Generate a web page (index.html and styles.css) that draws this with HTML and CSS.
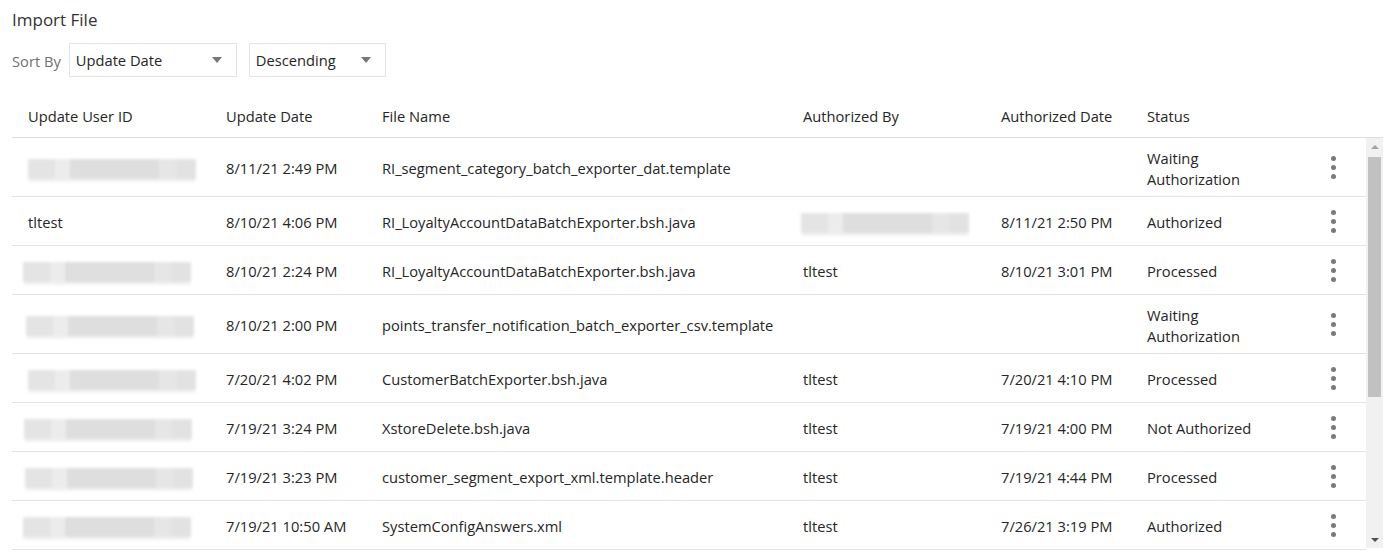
FILE: index.html
```html
<!DOCTYPE html>
<html>
<head>
<meta charset="utf-8">
<link rel="stylesheet" href="styles.css">
</head>
<body>
<div class="page">
  <h1 class="title">Import File</h1>
  <div class="toolbar">
    <span class="sort-label">Sort By</span>
    <div class="select sel-field"><span>Update Date</span><span class="caret"></span></div>
    <div class="select sel-order"><span>Descending</span><span class="caret"></span></div>
  </div>
  <div class="table">
    <div class="row head">
      <div class="cell">Update User ID</div>
      <div class="cell">Update Date</div>
      <div class="cell">File Name</div>
      <div class="cell">Authorized By</div>
      <div class="cell">Authorized Date</div>
      <div class="cell">Status</div>
      <div class="cell"></div>
    </div>
    <div class="body">
      <div class="rows">
        <div class="row tall">
          <div class="cell"><span class="blur"></span></div>
          <div class="cell">8/11/21 2:49 PM</div>
          <div class="cell">RI_segment_category_batch_exporter_dat.template</div>
          <div class="cell"></div>
          <div class="cell"></div>
          <div class="cell">Waiting<br>Authorization</div>
          <div class="cell kebab"><span></span><span></span><span></span></div>
        </div>
        <div class="row">
          <div class="cell">tltest</div>
          <div class="cell">8/10/21 4:06 PM</div>
          <div class="cell">RI_LoyaltyAccountDataBatchExporter.bsh.java</div>
          <div class="cell"><span class="blur shift-l2"></span></div>
          <div class="cell">8/11/21 2:50 PM</div>
          <div class="cell">Authorized</div>
          <div class="cell kebab"><span></span><span></span><span></span></div>
        </div>
        <div class="row">
          <div class="cell"><span class="blur shift-l5"></span></div>
          <div class="cell">8/10/21 2:24 PM</div>
          <div class="cell">RI_LoyaltyAccountDataBatchExporter.bsh.java</div>
          <div class="cell">tltest</div>
          <div class="cell">8/10/21 3:01 PM</div>
          <div class="cell">Processed</div>
          <div class="cell kebab"><span></span><span></span><span></span></div>
        </div>
        <div class="row tall">
          <div class="cell"><span class="blur shift-l2"></span></div>
          <div class="cell">8/10/21 2:00 PM</div>
          <div class="cell">points_transfer_notification_batch_exporter_csv.template</div>
          <div class="cell"></div>
          <div class="cell"></div>
          <div class="cell">Waiting<br>Authorization</div>
          <div class="cell kebab"><span></span><span></span><span></span></div>
        </div>
        <div class="row">
          <div class="cell"><span class="blur"></span></div>
          <div class="cell">7/20/21 4:02 PM</div>
          <div class="cell">CustomerBatchExporter.bsh.java</div>
          <div class="cell">tltest</div>
          <div class="cell">7/20/21 4:10 PM</div>
          <div class="cell">Processed</div>
          <div class="cell kebab"><span></span><span></span><span></span></div>
        </div>
        <div class="row">
          <div class="cell"><span class="blur shift-l4"></span></div>
          <div class="cell">7/19/21 3:24 PM</div>
          <div class="cell">XstoreDelete.bsh.java</div>
          <div class="cell">tltest</div>
          <div class="cell">7/19/21 4:00 PM</div>
          <div class="cell">Not Authorized</div>
          <div class="cell kebab"><span></span><span></span><span></span></div>
        </div>
        <div class="row">
          <div class="cell"><span class="blur shift-l3"></span></div>
          <div class="cell">7/19/21 3:23 PM</div>
          <div class="cell">customer_segment_export_xml.template.header</div>
          <div class="cell">tltest</div>
          <div class="cell">7/19/21 4:44 PM</div>
          <div class="cell">Processed</div>
          <div class="cell kebab"><span></span><span></span><span></span></div>
        </div>
        <div class="row">
          <div class="cell"><span class="blur shift-l5"></span></div>
          <div class="cell">7/19/21 10:50 AM</div>
          <div class="cell">SystemConfigAnswers.xml</div>
          <div class="cell">tltest</div>
          <div class="cell">7/26/21 3:19 PM</div>
          <div class="cell">Authorized</div>
          <div class="cell kebab"><span></span><span></span><span></span></div>
        </div>
      </div>
      <div class="scrollbar">
        <div class="sb-btn"><span class="sb-up"></span></div>
        <div class="sb-track">
          <div class="sb-thumb"></div>
        </div>
        <div class="sb-btn"><span class="sb-down"></span></div>
      </div>
    </div>
  </div>
</div>
</body>
</html>
```
FILE: styles.css
```css
html, body {
  margin: 0;
  padding: 0;
  background: #fff;
}
body {
  font-family: "Open Sans", "Noto Sans", sans-serif;
  font-size: 14.7px;
  color: #262626;
  overflow: hidden;
}
.page {
  padding: 8px 14px 0 12px;
}
.title {
  margin: 0;
  font-size: 17px;
  font-weight: 400;
  line-height: 24px;
  color: #333;
}
.toolbar {
  display: flex;
  align-items: center;
  margin-top: 11px;
  height: 34px;
}
.sort-label {
  color: #707070;
  margin-right: 8px;
  margin-top: 2px;
}
.select {
  height: 34px;
  box-sizing: border-box;
  border: 1px solid #e3e3e3;
  display: flex;
  align-items: center;
  justify-content: space-between;
  padding: 0 14px 0 6px;
  color: #262626;
}
.sel-field { width: 168px; }
.sel-order { width: 137px; margin-left: 12px; }
.caret {
  width: 0;
  height: 0;
  border-left: 5px solid transparent;
  border-right: 5px solid transparent;
  border-top: 6px solid #777;
}
.table {
  margin-top: 21px;
}
.row {
  display: grid;
  grid-template-columns: 198px 156px 421px 198px 146px 1fr 66px;
  align-items: center;
  height: 49px;
  box-sizing: border-box;
  border-bottom: 1px solid #e3e3e3;
}
.row.tall { height: 59px; }
.row.head {
  height: 40px;
  border-bottom: 1px solid #dedede;
  grid-template-columns: 198px 156px 421px 198px 146px 1fr 83px;
}
.cell {
  padding-left: 16px;
  white-space: nowrap;
  line-height: 21px;
  padding-top: 3px;
}
.head .cell {
  padding-top: 0;
  padding-bottom: 3px;
}
.body {
  display: flex;
  height: 412px;
  overflow: hidden;
}
.rows {
  flex: 1;
  min-width: 0;
}
.scrollbar {
  width: 17px;
  flex: none;
  background: #f1f1f1;
  display: flex;
  flex-direction: column;
  height: 410px;
}
.sb-btn {
  height: 17px;
  display: flex;
  align-items: center;
  justify-content: center;
}
.sb-up {
  width: 0;
  height: 0;
  border-left: 4px solid transparent;
  border-right: 4px solid transparent;
  border-bottom: 4px solid #a3a3a3;
}
.sb-down {
  width: 0;
  height: 0;
  border-left: 4px solid transparent;
  border-right: 4px solid transparent;
  border-top: 4px solid #505050;
}
.sb-track {
  flex: 1;
  padding: 2px 2px 0 2px;
}
.sb-thumb {
  height: 240px;
  background: #c1c1c1;
}
.blur {
  display: block;
  width: 168px;
  height: 20px;
  background:
    linear-gradient(90deg, #e4e4e4 0 16%, #ececec 16% 25%, #dedede 25% 78%, #e6e6e6 78% 88%, #e2e2e2 88% 100%);
  filter: blur(1.5px);
  box-shadow: 0 4px 0 -1px #f2f2f2;
}
.shift-l2 { margin-left: -2px; }
.shift-l3 { margin-left: -3px; }
.shift-l4 { margin-left: -4px; }
.shift-l5 { margin-left: -5px; }
.kebab {
  display: flex;
  flex-direction: column;
  align-items: center;
  gap: 4px;
  padding: 0;
}
.kebab span {
  width: 5px;
  height: 5px;
  border-radius: 50%;
  background: #7a7a7a;
}
```
